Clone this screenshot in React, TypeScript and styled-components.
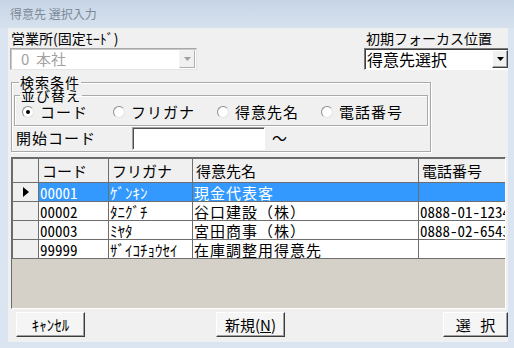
import React from "react";
import styled, { createGlobalStyle } from "styled-components";

type Customer = {
  code: string;
  kana: string;
  name: string;
  phone: string;
};

const customers: Customer[] = [
  { code: "00001", kana: "ｹﾞﾝｷﾝ", name: "現金代表客", phone: "" },
  { code: "00002", kana: "ﾀﾆｸﾞﾁ", name: "谷口建設（株）", phone: "0888-01-1234" },
  { code: "00003", kana: "ﾐﾔﾀ", name: "宮田商事（株）", phone: "0888-02-6543" },
  { code: "99999", kana: "ｻﾞｲｺﾁｮｳｾｲ", name: "在庫調整用得意先", phone: "" },
];

const sortOptions = [
  { label: "コード", width: 91, checked: true },
  { label: "フリガナ", width: 104, checked: false },
  { label: "得意先名", width: 104, checked: false },
  { label: "電話番号", width: 0, checked: false },
];

const GlobalStyle = createGlobalStyle`
  html, body { margin: 0; padding: 0; background: #dae5f1; }
  body { font-family: "Noto Sans CJK JP", "Noto Sans", sans-serif; color: #000; }
  * { box-sizing: border-box; }
`;

const Window = styled.div`
  width: 514px;
  height: 348px;
  background: #dae5f1;
  display: flex;
  flex-direction: column;
  overflow: hidden;
`;

const TitleBar = styled.div`
  height: 28px;
  flex: none;
  padding: 6px 0 0 10px;
  background: linear-gradient(#c6d5e6, #d6e1ee);
  color: #7c8898;
  font-size: 12px;
  line-height: 16px;
`;

const Client = styled.div`
  margin: 0 6px 0 8px;
  height: 314px;
  flex: none;
  background: #f0f0f0;
  display: flex;
  flex-direction: column;
  overflow: hidden;
`;

const TopRow = styled.div`
  height: 48px;
  flex: none;
  display: flex;
  justify-content: space-between;
`;

const Field = styled.div<{ $left: number; $right?: number }>`
  display: flex;
  flex-direction: column;
  margin-left: ${(p) => p.$left}px;
  margin-right: ${(p) => p.$right ?? 0}px;
`;

const FieldLabel = styled.div<{ $indent: number }>`
  height: 20px;
  padding: 2px 0 0 ${(p) => p.$indent}px;
  font-size: 14px;
  line-height: 17px;
  white-space: nowrap;
`;

const Combo = styled.div<{ $width: number; $disabled?: boolean }>`
  width: ${(p) => p.$width}px;
  height: 22px;
  display: flex;
  align-items: center;
  background: #fff;
  border: 1px solid;
  border-color: ${(p) =>
    p.$disabled ? "#a8a8a8 #e4e4e4 #e4e4e4 #a8a8a8" : "#7a7a7a #ffffff #ffffff #7a7a7a"};
  box-shadow: ${(p) => (p.$disabled ? "inset 1px 1px 0 #c8c8c8" : "inset 1px 1px 0 #404040")};
  padding: 1px 1px 1px 2px;
`;

const ComboText = styled.div<{ $disabled?: boolean }>`
  flex: 1;
  padding-left: ${(p) => (p.$disabled ? 8 : 0)}px;
  font-size: ${(p) => (p.$disabled ? 15 : 16)}px;
  line-height: 18px;
  color: ${(p) => (p.$disabled ? "#a2a2a2" : "#000")};
  white-space: pre;
`;

const ArrowButton = styled.div<{ $disabled?: boolean }>`
  width: 16px;
  height: 18px;
  display: flex;
  align-items: center;
  justify-content: center;
  background: #f0f0f0;
  border: 1px solid;
  border-color: ${(p) => (p.$disabled ? "#f4f4f4 #b0b0b0 #b0b0b0 #f4f4f4" : "#ffffff #404040 #404040 #ffffff")};
  box-shadow: ${(p) => (p.$disabled ? "none" : "inset -1px -1px 0 #a0a0a0")};
`;

const GroupBox = styled.fieldset<{ $width?: number; $pad: string; $top?: number }>`
  margin: ${(p) => p.$top ?? 0}px 0 0 ${(p) => (p.$width ? 3 : 0)}px;
  width: ${(p) => (p.$width ? `${p.$width}px` : "auto")};
  min-width: 0;
  padding: ${(p) => p.$pad};
  border: 1px solid #a9a9a9;
  box-shadow: 1px 1px 0 #fff, inset 1px 1px 0 #fff;
  flex: none;
`;

const Caption = styled.legend<{ $shift: number }>`
  margin-left: ${(p) => p.$shift}px;
  padding: 0 1px;
  font-size: 14px;
  line-height: 13px;
  height: 13px;
  letter-spacing: 1px;
`;

const RadioRow = styled.div`
  height: 18px;
  display: flex;
  align-items: center;
  padding-left: 7px;
`;

const RadioOption = styled.label<{ $width: number }>`
  display: flex;
  align-items: center;
  gap: 6px;
  width: ${(p) => (p.$width ? `${p.$width}px` : "auto")};
  font-size: 15px;
  line-height: 18px;
  letter-spacing: 1px;
`;

const RadioDot = styled.span<{ $checked: boolean }>`
  width: 12px;
  height: 12px;
  border-radius: 50%;
  background: #fff;
  border: 1px solid;
  border-color: #8c8c8c #e2e2e2 #e2e2e2 #8c8c8c;
  display: flex;
  align-items: center;
  justify-content: center;
  flex: none;

  &::after {
    content: "";
    width: 4px;
    height: 4px;
    border-radius: 50%;
    background: ${(p) => (p.$checked ? "#000" : "transparent")};
  }
`;

const StartRow = styled.div`
  height: 24px;
  display: flex;
  align-items: center;
  padding-left: 2px;
`;

const StartLabel = styled.span`
  width: 116px;
  font-size: 15px;
  letter-spacing: 1px;
  line-height: 18px;
`;

const TextInput = styled.div`
  width: 133px;
  height: 23px;
  background: #fff;
  border: 1px solid;
  border-color: #a0a0a0 #ffffff #ffffff #a0a0a0;
  box-shadow: inset 1px 1px 0 #505050;
`;

const Tilde = styled.span`
  margin-left: 7px;
  font-size: 15px;
  line-height: 18px;
`;

const GridFrame = styled.div`
  margin: 5px 0 0 3px;
  width: 495px;
  height: 152px;
  flex: none;
  background: #d5d1c9;
  border: 1px solid;
  border-color: #6a6a6a #ffffff #ffffff #6a6a6a;
  overflow: hidden;
`;

const Table = styled.table`
  table-layout: fixed;
  border-collapse: collapse;
  width: 506px;
`;

const HeadCell = styled.th`
  height: 24px;
  padding: 0 0 0 3px;
  background: #f0f0f0;
  border: 1px solid #6e6e6e;
  font-size: 15px;
  font-weight: normal;
  line-height: 18px;
  text-align: left;
  white-space: nowrap;
  overflow: hidden;
`;

const Row = styled.tr<{ $selected: boolean }>`
  height: 19px;
  background: ${(p) => (p.$selected ? "#3399ff" : "#fff")};
  color: ${(p) => (p.$selected ? "#fff" : "#000")};
`;

const RowHead = styled.td`
  padding: 0;
  background: #f0f0f0;
  border: 1px solid #6e6e6e;
  text-align: center;
  vertical-align: middle;
  line-height: 0;
`;

const Cell = styled.td<{ $narrow?: boolean; $wide?: boolean }>`
  padding: 0 0 0 ${(p) => (p.$narrow ? 1 : 1)}px;
  border: 1px solid #6e6e6e;
  font-size: 15px;
  letter-spacing: ${(p) => (p.$wide ? 1 : 0)}px;
  line-height: 17px;
  white-space: nowrap;
  overflow: hidden;
  font-feature-settings: ${(p) => (p.$narrow ? '"hwid"' : "normal")};
`;

const ButtonRow = styled.div`
  margin-top: 3px;
  height: 25px;
  display: flex;
`;

const Button = styled.button<{ $width: number; $gap: number }>`
  width: ${(p) => p.$width}px;
  height: 25px;
  margin-left: ${(p) => p.$gap}px;
  padding: 0;
  background: #f5f5f5;
  border: 1px solid;
  border-color: #ffffff #3c3c3c #3c3c3c #ffffff;
  box-shadow: inset -1px -1px 0 #a0a0a0;
  font-family: inherit;
  font-size: 15px;
  line-height: 18px;
  color: #000;
  word-spacing: 6px;
`;

const Marker = () => (
  <svg width="8" height="10" viewBox="0 0 8 10">
    <path d="M1 0 L7 5 L1 10 Z" fill="#000" />
  </svg>
);

const DownArrow = ({ color }: { color: string }) => (
  <svg width="7" height="4" viewBox="0 0 7 4">
    <path d="M0 0 H7 L3.5 4 Z" fill={color} />
  </svg>
);

const App = () => {
  return (
    <Window>
      <GlobalStyle />
      <TitleBar>得意先 選択入力</TitleBar>
      <Client>
        <TopRow>
          <Field $left={2}>
            <FieldLabel $indent={1}>営業所(固定ﾓｰﾄﾞ)</FieldLabel>
            <Combo $width={187} $disabled>
              <ComboText $disabled>{"0  本社"}</ComboText>
              <ArrowButton $disabled>
                <DownArrow color="#a0a0a0" />
              </ArrowButton>
            </Combo>
          </Field>
          <Field $left={0} $right={-2}>
            <FieldLabel $indent={2}>初期フォーカス位置</FieldLabel>
            <Combo $width={146}>
              <ComboText>得意先選択</ComboText>
              <ArrowButton>
                <DownArrow color="#000" />
              </ArrowButton>
            </Combo>
          </Field>
        </TopRow>

        <GroupBox $width={420} $pad="0 2px 1px 2px">
          <Caption $shift={5}>検索条件</Caption>
          <GroupBox $pad="1px 0 4px 0" $top={0}>
            <Caption $shift={5}>並び替え</Caption>
            <RadioRow>
              {sortOptions.map((o) => (
                <RadioOption key={o.label} $width={o.width}>
                  <RadioDot $checked={o.checked} />
                  {o.label}
                </RadioOption>
              ))}
            </RadioRow>
          </GroupBox>
          <StartRow>
            <StartLabel>開始コード</StartLabel>
            <TextInput />
            <Tilde>～</Tilde>
          </StartRow>
        </GroupBox>

        <GridFrame>
          <Table>
            <colgroup>
              <col style={{ width: 26 }} />
              <col style={{ width: 70 }} />
              <col style={{ width: 84 }} />
              <col style={{ width: 226 }} />
              <col style={{ width: 100 }} />
            </colgroup>
            <thead>
              <tr>
                <HeadCell />
                <HeadCell>コード</HeadCell>
                <HeadCell>フリガナ</HeadCell>
                <HeadCell>得意先名</HeadCell>
                <HeadCell>電話番号</HeadCell>
              </tr>
            </thead>
            <tbody>
              {customers.map((c, i) => (
                <Row key={c.code} $selected={i === 0}>
                  <RowHead>{i === 0 && <Marker />}</RowHead>
                  <Cell $narrow>{c.code}</Cell>
                  <Cell $narrow>{c.kana}</Cell>
                  <Cell $wide>{c.name}</Cell>
                  <Cell $narrow>{c.phone}</Cell>
                </Row>
              ))}
            </tbody>
          </Table>
        </GridFrame>

        <ButtonRow>
          <Button $width={69} $gap={8}>ｷｬﾝｾﾙ</Button>
          <Button $width={69} $gap={131}>
            新規(<u>N</u>)
          </Button>
          <Button $width={65} $gap={158}>選 択</Button>
        </ButtonRow>
      </Client>
    </Window>
  );
};

export default App;
